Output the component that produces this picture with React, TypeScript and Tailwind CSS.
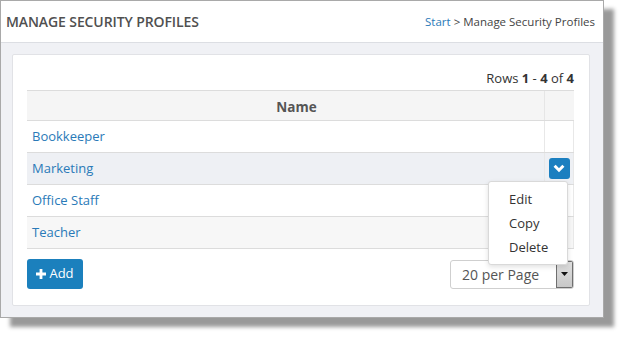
const rows = ['Bookkeeper', 'Marketing', 'Office Staff', 'Teacher'];

const rowBg = ['bg-white', 'bg-[#eef0f4]', 'bg-white', 'bg-[#f7f7f7]'];

const App = () => {
  return (
    <div
      className="h-[343px] w-[629px] bg-white text-[13px] text-[#333]"
      style={{ fontFamily: '"Open Sans", "Liberation Sans", sans-serif' }}
    >
      <div className="flex h-[318px] w-[604px] flex-col border border-[#a9a9a9] bg-[#f0f1f5] shadow-[10px_9px_4px_rgba(0,0,0,0.4)]">
        {/* Header */}
        <div className="flex h-[42px] items-center justify-between border-b border-[#dcdee3] bg-white pl-[5px] pr-[8px]">
          <h1 className="text-[14px] font-semibold tracking-[-0.1px] text-[#505050]">
            MANAGE SECURITY PROFILES
          </h1>
          <div className="text-[11.5px] text-[#444]">
            <a href="#" className="text-[#2a7ab8]">
              Start
            </a>{' '}
            &gt; Manage Security Profiles
          </div>
        </div>

        {/* Body */}
        <div className="flex-1 pb-[11px] pl-[11px] pr-[13px] pt-[11px]">
          <div className="h-full rounded-[2px] border border-[#e1e2e6] bg-white pl-[14px] pr-[15px] pt-[13px]">
            <div className="mb-[2px] h-5 text-right text-[13px] leading-5 text-[#333]">
              Rows <b>1</b> - <b>4</b> of <b>4</b>
            </div>

            <div className="relative">
              <div className="border-t border-[#dcdcdc]">
                <div className="flex h-[30px] border-b border-[#dcdcdc] bg-[#f5f5f5]">
                  <div className="flex flex-1 items-center justify-center pl-[22px] pt-[4px] text-[13.5px] font-bold text-[#555]">
                    Name
                  </div>
                  <div className="w-[30px] border-l border-[#e6e6e6]" />
                </div>
                {rows.map((name, i) => (
                  <div
                    key={name}
                    className={`flex h-[32px] border-b border-[#dcdcdc] ${rowBg[i]}`}
                  >
                    <div className="flex flex-1 items-center pl-[5px] pt-[1px]">
                      <a href="#" className="text-[13px] text-[#2a7ab8]">
                        {name}
                      </a>
                    </div>
                    <div className="flex w-[30px] items-center justify-center border-l border-r border-[#e8e8e8]">
                      {i === 1 && (
                        <button className="flex h-[21px] w-[21px] items-center justify-center rounded-[3px] bg-[#1b7fc0]">
                          <svg width="12" height="9" viewBox="0 0 12 9">
                            <path
                              d="M1.6 1.8 L6 6.2 L10.4 1.8"
                              fill="none"
                              stroke="white"
                              strokeWidth="3"
                            />
                          </svg>
                        </button>
                      )}
                    </div>
                  </div>
                ))}
              </div>

              {/* Row action menu */}
              <div className="absolute left-[461px] top-[91px] z-10 flex h-[84px] w-[80px] flex-col rounded-[3px] border border-[#d9d9d9] bg-white pt-[5px] text-[13px] text-[#333] shadow-[0_2px_5px_rgba(0,0,0,0.12)]">
                <div className="pl-[20px] leading-[24px]">Edit</div>
                <div className="pl-[20px] leading-[24px]">Copy</div>
                <div className="pl-[20px] leading-[24px]">Delete</div>
              </div>
            </div>

            <div className="mt-[10px] flex items-center justify-between">
              <button className="flex h-[30px] w-[56px] items-center justify-center gap-[3px] rounded-[3px] bg-[#1b80bd] text-[13px] text-white">
                <svg width="10" height="10" viewBox="0 0 10 10">
                  <path d="M3.6 0h2.8v3.6H10v2.8H6.4V10H3.6V6.4H0V3.6h3.6z" fill="white" />
                </svg>
                Add
              </button>
              <div className="flex h-[29px] w-[124px] items-stretch overflow-hidden rounded-[3px] border border-[#cfcfcf] bg-white">
                <div className="flex flex-1 items-center pl-[11px] text-[14px] text-[#555]">
                  20 per Page
                </div>
                <div className="flex w-[17px] items-center justify-center border border-[#6f6f6f] bg-[linear-gradient(#e0e0e0,#c8c8c8)]">
                  <svg width="7" height="4" viewBox="0 0 7 4">
                    <path d="M0 0h7L3.5 4z" fill="#111" />
                  </svg>
                </div>
              </div>
            </div>
          </div>
        </div>
      </div>
    </div>
  );
};

export default App;
